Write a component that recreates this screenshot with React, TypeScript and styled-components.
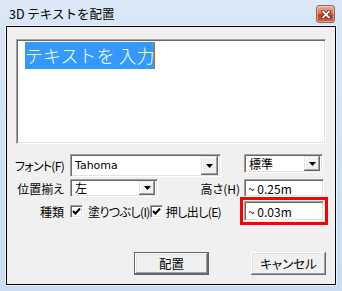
import React from "react";
import styled, { createGlobalStyle } from "styled-components";

const UI = `"Noto Sans CJK JP", "Noto Sans", sans-serif`;

const Global = createGlobalStyle`
  html, body { margin: 0; padding: 0; background: #ffffff; }
  body { font-family: ${UI}; }
  * { box-sizing: border-box; }
`;

const Window = styled.div`
  width: 342px;
  height: 291px;
  padding: 0 6px 6px 6px;
  background: linear-gradient(to bottom, #dde9f8 0px, #d7e5f6 26px, #cbdcf1 100%);
  display: flex;
  flex-direction: column;
  font-family: ${UI};
  font-feature-settings: "palt";
  color: #000;
`;

const TitleBar = styled.div`
  height: 26px;
  display: flex;
  justify-content: space-between;
  padding-left: 3px;
`;

const Title = styled.span`
  font-size: 12.5px;
  line-height: 26px;
  padding-top: 1px;
  font-feature-settings: normal;
  color: #000;
`;

const CloseButton = styled.div`
  width: 19px;
  height: 18px;
  margin-top: 5px;
  margin-right: 1px;
  border: 1px solid #8a6a64;
  border-radius: 3px;
  background: linear-gradient(to bottom, #eab0a0 0%, #d9755c 45%, #c5401f 55%, #d0603f 100%);
  display: flex;
  align-items: center;
  justify-content: center;
  box-shadow: inset 0 0 0 1px rgba(255, 220, 210, 0.5);
`;

const Client = styled.div`
  flex: 1;
  background: #f0f0f0;
  border: 1px solid #000;
  box-shadow: 0 0 0 1px rgba(255, 255, 255, 0.6);
  display: flex;
  flex-direction: column;
  padding: 12px 9px 9px 9px;
`;

const TextArea = styled.div`
  height: 105px;
  background: #fff;
  border-top: 1px solid #a0a0a0;
  border-left: 1px solid #a0a0a0;
  border-bottom: 1px solid #ffffff;
  border-right: 1px solid #ffffff;
  box-shadow: inset 1px 1px #696969, inset -1px -1px #e3e3e3;
  padding: 2px 0 0 8px;
  display: flex;
  align-items: flex-start;
`;

const Selected = styled.span`
  display: inline-block;
  background: #3399ff;
  color: #fff;
  font-size: 18px;
  font-weight: 300;
  line-height: 27px;
  height: 27px;
  font-feature-settings: normal;
  white-space: pre;
`;

const Caret = styled.span`
  display: inline-block;
  width: 1px;
  height: 27px;
  background: #cc6600;
`;

const Form = styled.div`
  margin-top: 10px;
  display: grid;
  grid-template-columns: 48px 168px 80px;
  grid-template-rows: 23px 18px 24px;
  column-gap: 6px;
  row-gap: 2px;
  font-size: 12px;
`;

const Label = styled.div<{ $tight?: boolean }>`
  display: flex;
  align-items: center;
  justify-content: flex-end;
  white-space: nowrap;
  letter-spacing: ${(p) => (p.$tight ? "-0.7px" : "0")};
`;

const Sunken = styled.div<{ $w?: number; $h?: number }>`
  width: ${(p) => (p.$w ? `${p.$w}px` : "100%")};
  height: ${(p) => (p.$h ? `${p.$h}px` : "100%")};
  background: #fff;
  border-top: 1px solid #a0a0a0;
  border-left: 1px solid #a0a0a0;
  border-bottom: 1px solid #ffffff;
  border-right: 1px solid #ffffff;
  box-shadow: inset 1px 1px #696969, inset -1px -1px #e3e3e3;
  padding: 2px 2px 2px 4px;
  display: flex;
  align-items: center;
  justify-content: space-between;
  white-space: nowrap;
`;

const ComboText = styled.span<{ $latin?: boolean }>`
  font-family: ${(p) => (p.$latin ? `"DejaVu Sans", ${UI}` : UI)};
  font-size: ${(p) => (p.$latin ? "11px" : "12px")};
  line-height: 14px;
`;

const DropButton = styled.div<{ $w: number; $h: number }>`
  width: ${(p) => p.$w}px;
  height: ${(p) => p.$h}px;
  flex: none;
  background: #f0f0f0;
  box-shadow: inset -1px -1px #696969, inset 1px 1px #e3e3e3, inset -2px -2px #a0a0a0, inset 2px 2px #ffffff;
  display: flex;
  align-items: center;
  justify-content: center;
`;

const Cell = styled.div<{ $align?: string }>`
  display: flex;
  align-items: ${(p) => p.$align || "center"};
`;

const SideLabel = styled.span`
  flex: 1;
  text-align: right;
  margin-right: -2px;
  white-space: nowrap;
`;

const Field = styled.div<{ $mark?: boolean; $h: number }>`
  width: 80px;
  height: ${(p) => p.$h}px;
  background: #fff;
  border-top: 1px solid #a0a0a0;
  border-left: 1px solid #a0a0a0;
  border-bottom: 1px solid #ffffff;
  border-right: 1px solid #ffffff;
  box-shadow: inset 1px 1px #696969, inset -1px -1px #e3e3e3;
  padding-left: 3px;
  display: flex;
  align-items: center;
  font-size: 12px;
  white-space: pre;
  font-feature-settings: normal;
  outline: ${(p) => (p.$mark ? "3px solid #ff0000" : "none")};
  outline-offset: 1px;
`;

const Check = styled.span`
  width: 13px;
  height: 13px;
  flex: none;
  background: #fff;
  border-top: 1px solid #a0a0a0;
  border-left: 1px solid #a0a0a0;
  border-bottom: 1px solid #ffffff;
  border-right: 1px solid #ffffff;
  box-shadow: inset 1px 1px #696969, inset -1px -1px #e3e3e3;
  display: flex;
  align-items: center;
  justify-content: center;
`;

const CheckText = styled.span<{ $gap: number }>`
  margin-left: ${(p) => p.$gap}px;
  white-space: nowrap;
  letter-spacing: -0.6px;
`;

const ButtonRow = styled.div`
  margin-top: auto;
  display: flex;
  justify-content: flex-end;
  gap: 42px;
`;

const Button = styled.div<{ $default?: boolean }>`
  width: 75px;
  height: 23px;
  background: #f0f0f0;
  display: flex;
  align-items: center;
  justify-content: center;
  font-size: 12.5px;
  border: ${(p) => (p.$default ? "1px solid #646464" : "none")};
  box-shadow: inset -1px -1px #696969, inset 1px 1px #ffffff, inset -2px -2px #a0a0a0, inset 2px 2px #e3e3e3;
`;

const Arrow = () => (
  <svg width="7" height="4" viewBox="0 0 7 4">
    <polygon points="0,0 7,0 3.5,4" fill="#000" />
  </svg>
);

const Tick = () => (
  <svg width="9" height="9" viewBox="0 0 9 9">
    <polyline points="1,4 3.5,6.5 8,1.5" fill="none" stroke="#000" strokeWidth="2" />
  </svg>
);

const CloseGlyph = () => (
  <svg width="10" height="9" viewBox="0 0 10 9">
    <path d="M2 1.5 L8 7.5 M8 1.5 L2 7.5" stroke="#5a2218" strokeWidth="3.4" strokeLinecap="square" />
    <path d="M2 1.5 L8 7.5 M8 1.5 L2 7.5" stroke="#ffffff" strokeWidth="1.8" strokeLinecap="square" />
  </svg>
);

export default function App() {
  return (
    <>
      <Global />
      <Window>
        <TitleBar>
          <Title>3D テキストを配置</Title>
          <CloseButton>
            <CloseGlyph />
          </CloseButton>
        </TitleBar>
        <Client>
          <TextArea>
            <Selected>テキストを 入力</Selected>
            <Caret />
          </TextArea>
          <Form>
            <Label $tight>フォント(F)</Label>
            <Cell>
              <Sunken $w={151} $h={23}>
                <ComboText $latin>Tahoma</ComboText>
                <DropButton $w={17} $h={19}>
                  <Arrow />
                </DropButton>
              </Sunken>
            </Cell>
            <Cell $align="flex-start">
              <Sunken $w={79} $h={19}>
                <ComboText>標準</ComboText>
                <DropButton $w={16} $h={15}>
                  <Arrow />
                </DropButton>
              </Sunken>
            </Cell>

            <Label>位置揃え</Label>
            <Cell>
              <Sunken $w={88} $h={18}>
                <ComboText>左</ComboText>
                <DropButton $w={16} $h={14}>
                  <Arrow />
                </DropButton>
              </Sunken>
              <SideLabel>高さ(H)</SideLabel>
            </Cell>
            <Cell>
              <Field $h={18}>~ 0.25m</Field>
            </Cell>

            <Label>種類</Label>
            <Cell>
              <Check>
                <Tick />
              </Check>
              <CheckText $gap={5}>塗りつぶし(I)</CheckText>
              <Check>
                <Tick />
              </Check>
              <CheckText $gap={3}>押し出し(E)</CheckText>
            </Cell>
            <Cell>
              <Field $h={20} $mark>~ 0.03m</Field>
            </Cell>
          </Form>
          <ButtonRow>
            <Button $default>配置</Button>
            <Button>キャンセル</Button>
          </ButtonRow>
        </Client>
      </Window>
    </>
  );
}
